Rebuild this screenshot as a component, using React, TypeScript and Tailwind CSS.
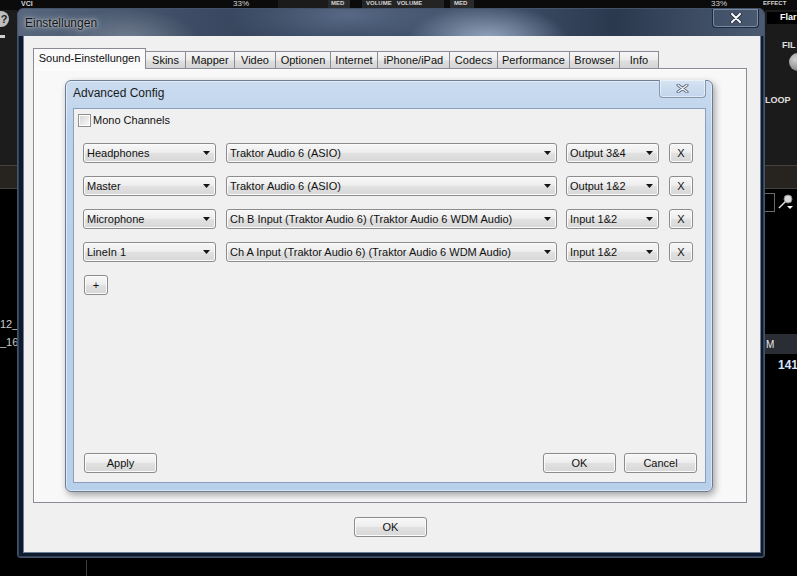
import React from "react";

type Route = { role: string; device: string; channel: string };

const routes: Route[] = [
  { role: "Headphones", device: "Traktor Audio 6 (ASIO)", channel: "Output 3&4" },
  { role: "Master", device: "Traktor Audio 6 (ASIO)", channel: "Output 1&2" },
  {
    role: "Microphone",
    device: "Ch B Input (Traktor Audio 6) (Traktor Audio 6 WDM Audio)",
    channel: "Input 1&2",
  },
  {
    role: "LineIn 1",
    device: "Ch A Input (Traktor Audio 6) (Traktor Audio 6 WDM Audio)",
    channel: "Input 1&2",
  },
];

const tabs = [
  { name: "Sound-Einstellungen", w: "w-[113px]" },
  { name: "Skins", w: "w-[40px]" },
  { name: "Mapper", w: "w-[49px]" },
  { name: "Video", w: "w-[41px]" },
  { name: "Optionen", w: "w-[55px]" },
  { name: "Internet", w: "w-[47px]" },
  { name: "iPhone/iPad", w: "w-[72px]" },
  { name: "Codecs", w: "w-[48px]" },
  { name: "Performance", w: "w-[72px]" },
  { name: "Browser", w: "w-[50px]" },
  { name: "Info", w: "w-[39px]" },
];

// win7 style push button face
const face =
  "bg-[linear-gradient(to_bottom,#f7f7f7_0%,#eeeeee_46%,#e1e1e1_52%,#d7d7d7_100%)] border border-[#8c8c8c] rounded-[3px] shadow-[inset_0_0_0_1px_#fbfbfb]";

function Arrow() {
  return (
    <svg width="7" height="4" viewBox="0 0 7 4" className="shrink-0">
      <path d="M0 0h7L3.5 4z" fill="#151515" />
    </svg>
  );
}

function Combo({ label, w }: { label: string; w: string }) {
  return (
    <div className={`${w} h-[20px] ${face} flex items-center pl-[3px] pr-[5px] text-[11px] text-[#111]`}>
      <span className="flex-1 truncate">{label}</span>
      <Arrow />
    </div>
  );
}

function Button({ label, w }: { label: string; w: string }) {
  return (
    <div className={`${w} h-[20px] ${face} flex items-center justify-center text-[11px] text-[#111]`}>
      {label}
    </div>
  );
}

// the DJ app that sits behind the settings window
function DeckTop() {
  return (
    <div className="h-[10px] shrink-0 flex items-start bg-[#0b0b0b] text-[#d4d4d4] leading-none">
      <div className="w-[21px]" />
      <span className="w-[212px] text-[7px] font-bold">VCI</span>
      <span className="w-[45px] text-[8px]">33%</span>
      <div className="w-[50px] self-stretch bg-[#1b1b1b]" />
      <span className="w-[22px] self-stretch bg-[#2a2a2a] pl-[3px] text-[6px] font-bold">MED</span>
      <div className="w-[12px]" />
      <span className="w-[82px] self-stretch bg-[#242424] flex gap-[5px] pl-[4px] text-[6px] font-bold">
        <span>VOLUME</span>
        <span>VOLUME</span>
      </span>
      <div className="w-[6px]" />
      <span className="w-[24px] self-stretch bg-[#2a2a2a] pl-[4px] text-[6px] font-bold">MED</span>
      <div className="w-[237px]" />
      <span className="w-[52px] text-[8px]">33%</span>
      <span className="flex-1 text-[6px] font-bold">EFFECT</span>
    </div>
  );
}

function DeckLeft() {
  return (
    <div className="w-[17px] flex flex-col text-[#c9c9c9]">
      <div className="h-[155px] bg-[#1c1c1c] flex flex-col pt-px">
        <div className="-ml-[7px] w-[16px] h-[16px] rounded-full bg-[#bdbdbd] flex items-center justify-center pl-[6px] text-[11px] font-bold text-[#222]">
          ?
        </div>
        <div className="mt-[8px] w-[5px] h-[3px] bg-[#cfcfcf]" />
      </div>
      <div className="h-[24px] bg-[#27241f] border-y border-[#45423c]" />
      <div className="mt-[126px] text-[11px] leading-[18px]">
        <div>12_</div>
        <div>_16</div>
      </div>
    </div>
  );
}

function DeckRight() {
  return (
    <div className="w-[32px] flex flex-col text-[9px] font-bold text-[#e0e0e0]">
      <div className="h-[155px] bg-[#1b1b1b] flex flex-col pt-[2px]">
        <div className="ml-[2px] h-[12px] bg-black flex items-center pl-[13px] text-white">Flar</div>
        <div className="mt-[16px] pl-[17px] leading-[10px]">FIL</div>
        <div className="mt-[3px] ml-[24px] w-[18px] h-[18px] rounded-full bg-[radial-gradient(circle_at_35%_35%,#d0d0d0,#6a6a6a)]" />
        <div className="mt-[24px] leading-[10px]">LOOP</div>
      </div>
      <div className="h-[24px] bg-[#27241f] border-y border-[#45423c]" />
      <div className="mt-[4px] flex items-start gap-[3px]">
        <div className="w-[10px] h-[19px] border border-l-0 border-[#6a6a6a]" />
        <svg width="16" height="17" viewBox="0 0 16 17" className="mt-px">
          <circle cx="10" cy="5" r="4" fill="#d9d9d9" stroke="#888" />
          <path d="M7 8L1 14" stroke="#e6e6e6" strokeWidth="1.5" />
          <path d="M9 12h6l-3 3z" fill="#fff" />
        </svg>
      </div>
      <div className="mt-[122px] h-[20px] bg-[#2a2d33] flex items-center pl-px text-[10px] font-normal text-[#e8e8e8]">
        M
      </div>
      <div className="mt-[2px] pl-[13px] text-[12px] text-[#d6e4ff]">141</div>
    </div>
  );
}

function GlassClose() {
  return (
    <div className="absolute right-[5px] top-0 w-[47px] h-[19px] rounded-b-[4px] border border-t-0 border-[#1e2b3e] shadow-[inset_0_0_0_1px_rgba(190,205,225,0.45)] bg-[rgba(70,85,110,0.35)] flex items-center justify-center">
      <svg width="12" height="10" viewBox="0 0 12 10">
        <path d="M2 1l8 8M10 1l-8 8" stroke="#1a2435" strokeWidth="3.4" strokeLinecap="round" />
        <path d="M2 1l8 8M10 1l-8 8" stroke="#fff" strokeWidth="2" strokeLinecap="round" />
      </svg>
    </div>
  );
}

function AdvancedConfig() {
  return (
    <div className="w-[648px] h-[412px] rounded-[6px] border border-[#6d7d94] bg-[linear-gradient(to_bottom,#cbdcf0,#bad1ea_12%,#b9d0ea)] shadow-[2px_3px_7px_rgba(0,0,0,0.35),inset_0_0_0_1px_rgba(255,255,255,0.45)] flex flex-col relative">
      <div className="h-[27px] flex items-center pl-[7px] pb-[3px] text-[12px] text-[#1b1b1b]">Advanced Config</div>
      <div className="absolute right-[6px] top-[-1px] w-[47px] h-[18px] rounded-b-[4px] border border-t-0 border-[#8697af] bg-[linear-gradient(to_bottom,#d6e3f3,#c2d5ec)] shadow-[inset_0_0_0_1px_rgba(255,255,255,0.5)] flex items-center justify-center">
        <svg width="13" height="9" viewBox="0 0 13 9">
          <path d="M2 1l9 7M11 1l-9 7" stroke="#5d6a7c" strokeWidth="3" strokeLinecap="round" />
          <path d="M2 1l9 7M11 1l-9 7" stroke="#f4f7fb" strokeWidth="1.2" strokeLinecap="round" />
        </svg>
      </div>
      <div className="flex-1 ml-[7px] mr-[6px] mb-[8px] border border-[#8c9fba] bg-[#f0f0f0] flex flex-col pt-[5px] pl-[4px] pr-[8px] pb-[9px]">
        <div className="flex items-center gap-[2px] h-[13px] text-[11px] text-[#111]">
          <div className="w-[13px] h-[13px] border border-[#8e8f8f] bg-white p-px">
            <div className="w-full h-full bg-[linear-gradient(135deg,#d8d8d8,#f6f6f6)]" />
          </div>
          <span>Mono Channels</span>
        </div>
        <div className="flex flex-col gap-[13px] mt-[16px] pl-[5px]">
          {routes.map((r) => (
            <div key={r.role} className="flex items-center">
              <Combo label={r.role} w="w-[133px]" />
              <div className="w-[10px]" />
              <Combo label={r.device} w="w-[331px]" />
              <div className="w-[9px]" />
              <Combo label={r.channel} w="w-[93px]" />
              <div className="w-[10px]" />
              <Button label="X" w="w-[24px]" />
            </div>
          ))}
          <div className="pl-px">
            <Button label="+" w="w-[24px]" />
          </div>
        </div>
        <div className="mt-auto flex items-center pl-[6px]">
          <Button label="Apply" w="w-[73px]" />
          <div className="flex-1" />
          <Button label="OK" w="w-[73px]" />
          <div className="w-[8px]" />
          <Button label="Cancel" w="w-[73px]" />
        </div>
      </div>
    </div>
  );
}

export default function App() {
  return (
    <div className="relative w-[797px] h-[576px] bg-black overflow-hidden flex flex-col font-['Liberation_Sans',Arial,sans-serif]">
      <DeckTop />
      <div className="flex-1 flex">
        <DeckLeft />
        <div className="flex-1" />
        <DeckRight />
      </div>
      <div className="h-[18px] shrink-0 pl-[86px] pt-[2px]">
        <div className="w-px h-full bg-[#3c3c3c]" />
      </div>

      {/* Einstellungen window */}
      <div className="absolute left-[17px] top-[8px] w-[748px] h-[550px] rounded-t-[6px] rounded-b-[3px] border border-[#45536a] bg-[#0e1b2e] shadow-[inset_0_0_0_1px_rgba(120,140,170,0.35)] flex flex-col overflow-hidden">
        <div className="relative h-[27px] shrink-0 bg-[radial-gradient(ellipse_80px_34px_at_470px_30px,rgba(165,180,205,0.85),transparent),radial-gradient(ellipse_120px_40px_at_330px_6px,rgba(105,125,155,0.7),transparent),radial-gradient(ellipse_70px_30px_at_110px_30px,rgba(140,150,165,0.6),transparent),linear-gradient(to_right,#58677d,#3e4d65_22%,#2c3a51_45%,#45566f_60%,#2b394f_80%,#4b5b72)] flex items-center pl-[7px]">
          <span className="text-[12px] text-[#101010] [text-shadow:0_0_6px_rgba(255,255,255,0.85),0_0_2px_rgba(255,255,255,0.7)]">
            Einstellungen
          </span>
          <GlassClose />
        </div>
        <div className="flex-1 flex pl-[6px] pb-[5px]">
          <div className="w-[736px] h-[516px] bg-[#f0f0f0] shadow-[0_0_0_1px_#6f7e93] flex flex-col pt-[12px] pl-[9px]">
            <div className="flex items-end h-[21px]">
              {tabs.map((t, i) =>
                i === 0 ? (
                  <div
                    key={t.name}
                    className={`${t.w} h-[21px] relative z-10 border border-b-0 border-[#898c95] bg-[#fafafa] flex items-center justify-center pb-[2px] text-[11px] text-[#111]`}
                  >
                    {t.name}
                  </div>
                ) : (
                  <div
                    key={t.name}
                    className={`${t.w} h-[17px] mb-px border-t border-r border-[#898c95] bg-[linear-gradient(to_bottom,#f6f6f6_0%,#ececec_50%,#dfdfdf_55%,#d4d4d4_100%)] flex items-center justify-center text-[11px] text-[#111]`}
                  >
                    {t.name}
                  </div>
                )
              )}
            </div>
            <div className="w-[714px] h-[435px] -mt-px border border-[#898c95] bg-[#f8f8f8] shadow-[inset_1px_1px_0_#fff] pt-[11px] pl-[31px]">
              <AdvancedConfig />
            </div>
            <div className="mt-[14px] ml-[321px]">
              <Button label="OK" w="w-[73px]" />
            </div>
          </div>
        </div>
      </div>
    </div>
  );
}
